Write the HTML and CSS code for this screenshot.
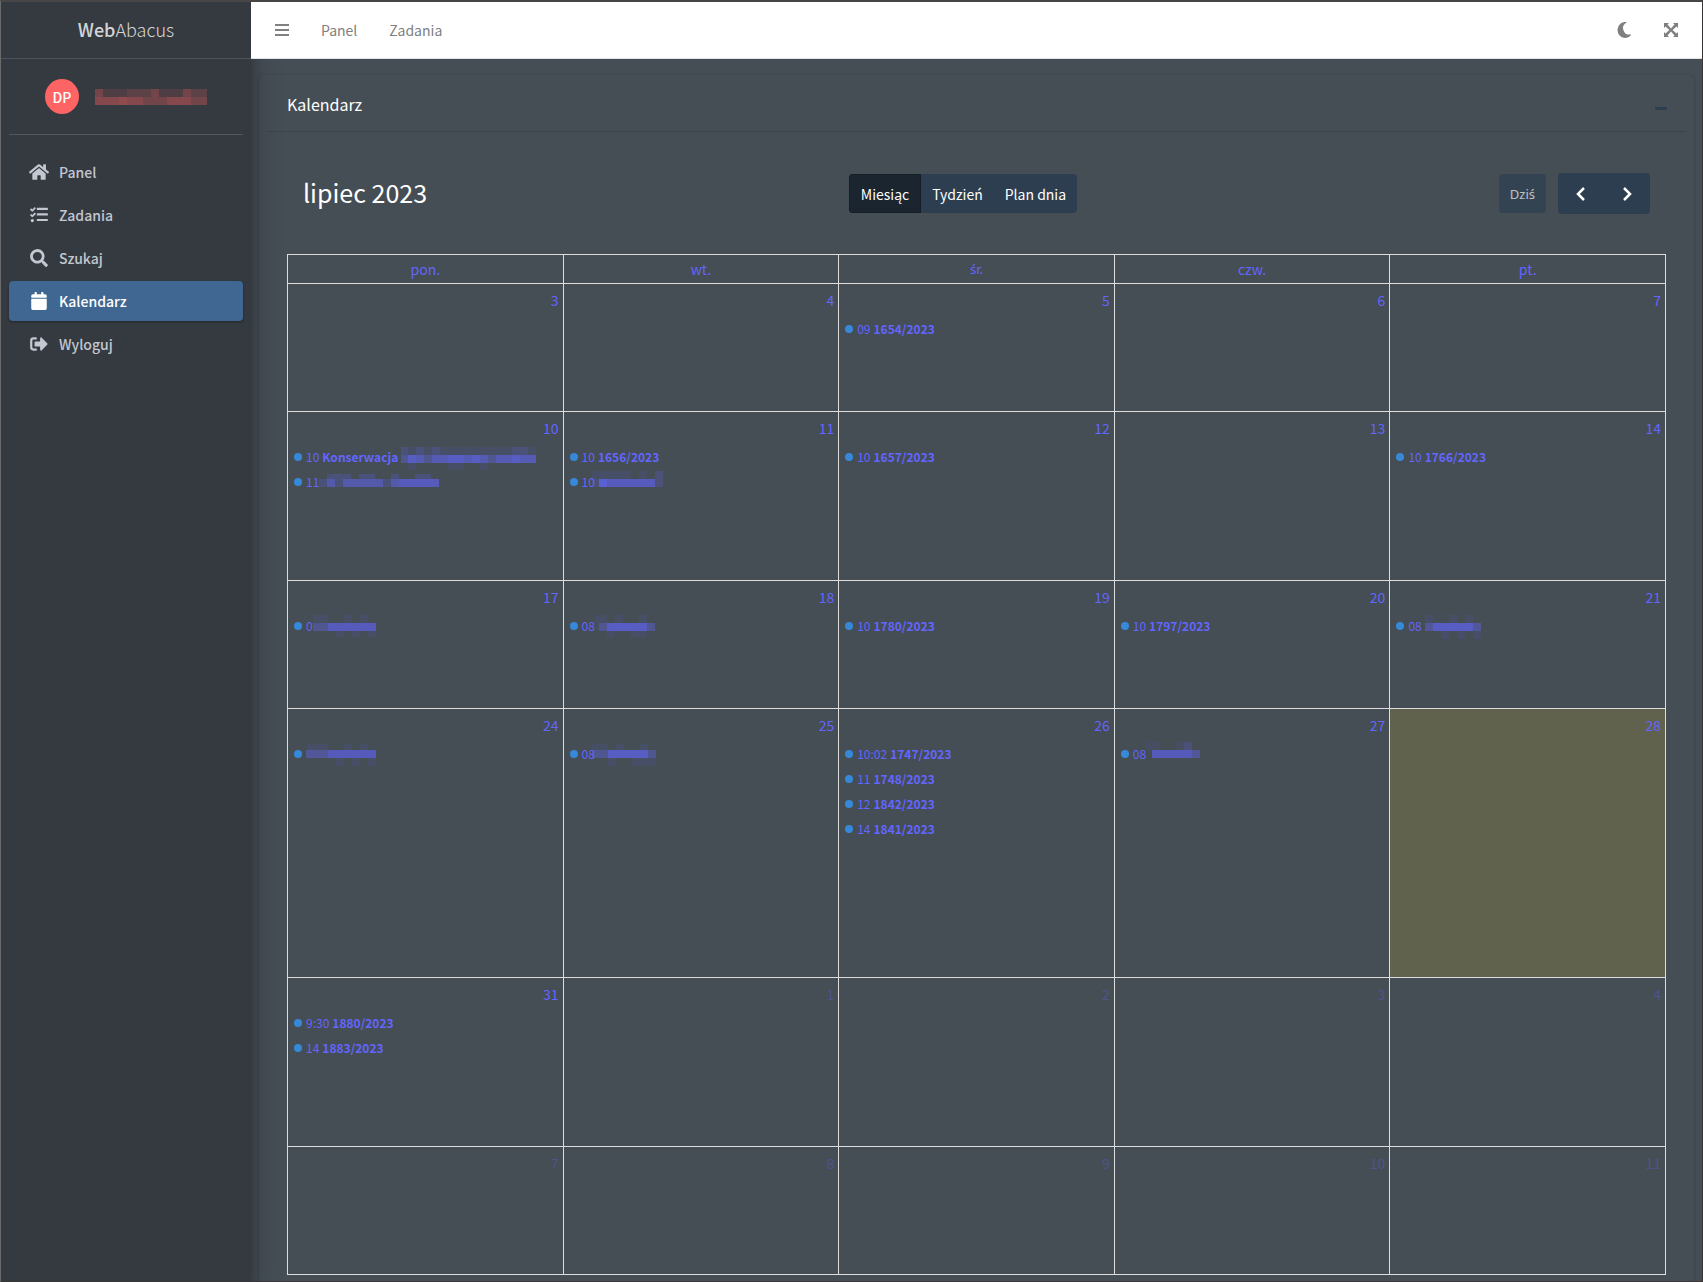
FILE: index.html
```html
<!DOCTYPE html>
<html lang="pl">
<head>
<meta charset="utf-8">
<meta name="viewport" content="width=device-width, initial-scale=1">
<title>WebAbacus – Kalendarz</title>
<link rel="stylesheet" href="styles.css">
</head>
<body>
<div class="app">
  <aside class="sidebar">
    <a href="#" class="brand"><span class="brand-strong">Web</span>Abacus</a>
    <div class="sidebar-inner">
      <a href="#" class="user" aria-label="Profil">
        <span class="avatar">DP</span>
        <svg class="user-name" width="112" height="16" viewBox="0 0 112 16" shape-rendering="crispEdges" aria-hidden="true">
          <path fill-opacity=".13" d="M8 0h24v8H8zM64 0h24v8H64z"/>
          <path fill-opacity=".2" d="M32 0h24v8H32zM96 0h16v8H96z"/>
          <path fill-opacity=".3" d="M0 0h8v8H0zM56 0h8v16H56zM88 0h8v8H88zM48 8h8v8h-8zM64 8h8v8h-8zM96 8h16v8H96z"/>
          <path fill-opacity=".4" d="M0 8h24v8H0zM32 8h16v8H32zM72 8h24v8H72z"/>
          <path fill-opacity=".46" d="M24 8h8v8h-8z"/>
        </svg>
      </a>
      <nav class="side-nav">
        <a href="#" class="side-link">
          <svg class="side-icon" viewBox="0 0 576 512" aria-hidden="true"><path d="M280 148L96 300v164a16 16 0 0 0 16 16l112-1a16 16 0 0 0 16-16v-95a16 16 0 0 1 16-16h64a16 16 0 0 1 16 16v95a16 16 0 0 0 16 16l112 1a16 16 0 0 0 16-16V300L296 148a12 12 0 0 0-16 0zM572 251l-84-69V44a12 12 0 0 0-12-12h-56a12 12 0 0 0-12 12v72l-90-74a48 48 0 0 0-61 0L4 251a12 12 0 0 0-1 17l25 31a12 12 0 0 0 17 2l235-194a12 12 0 0 1 16 0l235 194a12 12 0 0 0 17-2l25-31a12 12 0 0 0-1-17z"/></svg>
          Panel</a>
        <a href="#" class="side-link">
          <svg class="side-icon" viewBox="-32 0 576 512" aria-hidden="true"><path d="M140 35a12 12 0 0 0-17 0L64 94 41 72a12 12 0 0 0-17 0L4 92a12 12 0 0 0 0 17l48 47a18 18 0 0 0 24 0l15-15 69-70a12 12 0 0 0 0-17zM140 194a12 12 0 0 0-17 0l-59 60-23-21a12 12 0 0 0-17 0L4 252a12 12 0 0 0 0 17l48 48a17 17 0 0 0 24 0l84-86a12 12 0 0 0 0-17zM64 368a48 48 0 1 0 0 96 48 48 0 0 0 0-96zM208 48h288a16 16 0 0 1 16 16v32a16 16 0 0 1-16 16H208a16 16 0 0 1-16-16V64a16 16 0 0 1 16-16zM208 208h288a16 16 0 0 1 16 16v32a16 16 0 0 1-16 16H208a16 16 0 0 1-16-16v-32a16 16 0 0 1 16-16zM208 368h288a16 16 0 0 1 16 16v32a16 16 0 0 1-16 16H208a16 16 0 0 1-16-16v-32a16 16 0 0 1 16-16z"/></svg>
          Zadania</a>
        <a href="#" class="side-link">
          <svg class="side-icon" viewBox="-32 0 576 512" aria-hidden="true"><path d="M505 443L405 343c-4-4-11-7-17-7h-16a208 208 0 1 0-36 36v16c0 6 3 13 7 17l100 100c9 9 25 9 34 0l28-28c9-10 9-25 0-34zM208 336a128 128 0 1 1 0-256 128 128 0 0 1 0 256z"/></svg>
          Szukaj</a>
        <a href="#" class="side-link side-link-active" aria-current="page">
          <svg class="side-icon" viewBox="-64 0 576 512" aria-hidden="true"><path d="M12 192h424a12 12 0 0 1 12 12v260a48 48 0 0 1-48 48H48a48 48 0 0 1-48-48V204a12 12 0 0 1 12-12zM448 148v-36a48 48 0 0 0-48-48h-48V12a12 12 0 0 0-12-12h-40a12 12 0 0 0-12 12v52H160V12a12 12 0 0 0-12-12h-40a12 12 0 0 0-12 12v52H48a48 48 0 0 0-48 48v36a12 12 0 0 0 12 12h424a12 12 0 0 0 12-12z"/></svg>
          Kalendarz</a>
        <a href="#" class="side-link">
          <svg class="side-icon" viewBox="-32 0 576 512" aria-hidden="true"><path d="M497 273L329 441c-15 15-41 5-41-17v-96H152a24 24 0 0 1-24-24v-96a24 24 0 0 1 24-24h136V88c0-21 26-32 41-17l168 168c9 9 9 25 0 34zM192 436v-40a12 12 0 0 0-12-12H96a32 32 0 0 1-32-32V160a32 32 0 0 1 32-32h84a12 12 0 0 0 12-12V76a12 12 0 0 0-12-12H96a96 96 0 0 0-96 96v192a96 96 0 0 0 96 96h84a12 12 0 0 0 12-12z"/></svg>
          Wyloguj</a>
      </nav>
    </div>
  </aside>

  <div class="page">
    <header class="topbar">
      <nav class="top-nav">
        <button class="icon-button" type="button" aria-label="Menu">
          <svg width="14" height="16" viewBox="0 0 14 16" aria-hidden="true"><path d="M0 2h14v2H0zM0 7h14v2H0zM0 12h14v2H0z"/></svg>
        </button>
        <a href="#" class="top-link">Panel</a>
        <a href="#" class="top-link">Zadania</a>
      </nav>
      <div class="top-tools">
        <button class="icon-button" type="button" aria-label="Tryb ciemny">
          <svg width="16" height="16" viewBox="0 0 512 512" aria-hidden="true"><path d="M283 512c79 0 151-36 199-95 7-8 0-21-11-19A204 204 0 0 1 332 20c9-5 7-19-4-21a256 256 0 1 0-45 513z"/></svg>
        </button>
        <button class="icon-button" type="button" aria-label="Pełny ekran">
          <svg width="14" height="14" viewBox="0 0 14 14" aria-hidden="true"><path d="M0 0h5L3.500 1.500 7 5.400l3.500-3.900L9 0h5v5l-1.500-1.500L8.600 7l3.900 3.500L14 9v5H9l1.500-1.500L7 8.600l-3.500 3.900L5 14H0V9l1.500 1.500L5.400 7 1.500 3.500 0 5z"/></svg>
        </button>
      </div>
    </header>

    <main class="content">
      <section class="card">
        <div class="card-header">
          <h1 class="card-title">Kalendarz</h1>
          <button class="collapse" type="button" aria-label="Zwiń">
            <svg width="12" height="4" viewBox="0 0 12 4" aria-hidden="true"><rect width="12" height="3" rx="1"/></svg>
          </button>
        </div>
        <div class="card-body">
          <div class="toolbar">
            <h2 class="month">lipiec 2023</h2>
            <div class="button-group">
              <button class="btn btn-active" type="button">Miesiąc</button>
              <button class="btn" type="button">Tydzień</button>
              <button class="btn" type="button">Plan dnia</button>
            </div>
            <div class="toolbar-end">
              <button class="btn btn-today latin-ext" type="button" disabled>Dziś</button>
              <div class="button-group">
                <button class="btn btn-arrow" type="button" aria-label="Poprzedni">
                  <svg width="10" height="16" viewBox="0 0 10 16" aria-hidden="true"><path d="M8 2L2 8l6 6"/></svg>
                </button>
                <button class="btn btn-arrow" type="button" aria-label="Następny">
                  <svg width="10" height="16" viewBox="0 0 10 16" aria-hidden="true"><path d="M2 2l6 6-6 6"/></svg>
                </button>
              </div>
            </div>
          </div>

          <table class="calendar">
            <thead>
              <tr><th>pon.</th><th>wt.</th><th class="latin-ext">śr.</th><th>czw.</th><th>pt.</th></tr>
            </thead>
            <tbody>
              <tr class="week">
                <td><a href="#" class="day">3</a></td>
                <td><a href="#" class="day">4</a></td>
                <td><a href="#" class="day">5</a>
                  <a href="#" class="event"><span>09</span><b>1654/2023</b></a></td>
                <td><a href="#" class="day">6</a></td>
                <td><a href="#" class="day">7</a></td>
              </tr>
              <tr class="week week-medium">
                <td><a href="#" class="day">10</a>
                  <a href="#" class="event"><span>10</span><b>Konserwacja</b>
                    <svg class="mask" width="135" height="24" viewBox="1 -2 135 24" aria-hidden="true">
                      <path fill-opacity=".22" d="M1 0h7v8H1zM16 0h8v8h-8zM32 0h8v8h-8zM112 0h16v8h-16z"/>
                      <path fill-opacity=".1" d="M8 0h8v8H8zM24 0h8v8h-8zM40 0h72v8H40zM128 0h8v8h-8zM8 16h8v7H8zM48 16h16v7H48zM80 16h8v7h-8z"/>
                      <path fill-opacity=".35" d="M1 8h7v8H1zM24 8h8v8h-8zM88 8h8v8h-8z"/>
                      <path fill-opacity=".55" d="M16 8h8v8h-8zM32 8h16v8H32zM64 8h8v8h-8zM80 8h8v8h-8zM96 8h16v8H96zM120 8h16v8h-16z"/>
                      <path fill-opacity=".65" d="M8 8h8v8H8zM48 8h16v8H48zM72 8h8v8h-8zM112 8h8v8h-8z"/>
                    </svg></a>
                  <a href="#" class="event"><span>11</span>
                    <svg class="mask mask-tight" width="120" height="24" viewBox="0 -1 120 24" aria-hidden="true">
                      <path fill-opacity=".22" d="M0 8h8v8H0zM8 3h24v5H8zM40 3h16v5H40zM72 3h8v5h-8zM96 3h16v5H96zM64 8h8v8h-8zM16 8h8v8h-8z"/>
                      <path fill-opacity=".5" d="M8 8h8v8H8zM24 8h40v8H24zM72 8h8v8h-8z"/>
                      <path fill-opacity=".6" d="M80 8h40v8H80z"/>
                    </svg></a></td>
                <td><a href="#" class="day">11</a>
                  <a href="#" class="event"><span>10</span><b>1656/2023</b></a>
                  <a href="#" class="event"><span>10</span>
                    <svg class="mask mask-over" width="71" height="24" viewBox="1 -1 71 24" aria-hidden="true">
                      <path fill-opacity=".1" d="M1 0h39v8H1zM48 0h8v8h-8z"/>
                      <path fill-opacity=".2" d="M64 0h8v16h-8zM1 8h7v8H1z"/>
                      <path fill-opacity=".6" d="M16 8h48v8H16z"/>
                      <path fill-opacity=".75" d="M8 8h8v8H8z"/>
                    </svg></a></td>
                <td><a href="#" class="day">12</a>
                  <a href="#" class="event"><span>10</span><b>1657/2023</b></a></td>
                <td><a href="#" class="day">13</a></td>
                <td><a href="#" class="day">14</a>
                  <a href="#" class="event"><span>10</span><b>1766/2023</b></a></td>
              </tr>
              <tr class="week">
                <td><a href="#" class="day">17</a>
                  <a href="#" class="event"><span>0</span>
                    <svg class="mask mask-tight" width="63" height="24" viewBox="1 -1 63 24" aria-hidden="true">
                      <path fill-opacity=".1" d="M1 0h15v8H1zM32 0h8v8h-8zM48 0h8v8h-8zM24 16h8v6h-8zM40 16h8v6h-8zM56 16h8v6h-8z"/>
                      <path fill-opacity=".35" d="M1 8h15v8H1z"/>
                      <path fill-opacity=".6" d="M16 8h48v8H16z"/>
                    </svg></a></td>
                <td><a href="#" class="day">18</a>
                  <a href="#" class="event"><span>08</span>
                    <svg class="mask mask-tight" width="60" height="24" viewBox="4 -1 60 24" aria-hidden="true">
                      <path fill-opacity=".1" d="M4 0h12v8H4zM24 0h8v8h-8zM48 0h8v8h-8zM4 8h4v8H4zM16 16h8v6h-8zM40 16h16v6H40z"/>
                      <path fill-opacity=".35" d="M8 8h8v8H8zM56 8h8v8h-8z"/>
                      <path fill-opacity=".65" d="M16 8h40v8H16z"/>
                    </svg></a></td>
                <td><a href="#" class="day">19</a>
                  <a href="#" class="event"><span>10</span><b>1780/2023</b></a></td>
                <td><a href="#" class="day">20</a>
                  <a href="#" class="event"><span>10</span><b>1797/2023</b></a></td>
                <td><a href="#" class="day">21</a>
                  <a href="#" class="event"><span>08</span>
                    <svg class="mask" width="56" height="24" viewBox="0 -1 56 24" aria-hidden="true">
                      <path fill-opacity=".1" d="M0 0h8v8H0zM24 0h8v8h-8zM40 0h8v8h-8zM16 16h8v8h-8zM32 16h8v8h-8zM48 16h8v8h-8z"/>
                      <path fill-opacity=".4" d="M0 8h8v8H0zM48 8h8v8h-8z"/>
                      <path fill-opacity=".65" d="M8 8h40v8H8z"/>
                    </svg></a></td>
              </tr>
              <tr class="week week-tall">
                <td><a href="#" class="day">24</a>
                  <a href="#" class="event">
                    <svg class="mask" width="70" height="24" viewBox="0 0 70 24" aria-hidden="true">
                      <path fill-opacity=".1" d="M1 2h21v6H1zM38 2h8v6h-8zM54 2h8v6h-8zM30 16h8v8h-8zM46 16h8v8h-8zM62 16h8v8h-8z"/>
                      <path fill-opacity=".4" d="M0 8h22v8H0z"/>
                      <path fill-opacity=".6" d="M22 8h48v8H22z"/>
                    </svg></a></td>
                <td><a href="#" class="day">25</a>
                  <a href="#" class="event"><span>08</span>
                    <svg class="mask mask-over" width="64" height="24" viewBox="0 0 64 24" aria-hidden="true">
                      <path fill-opacity=".1" d="M0 2h16v6H0zM24 2h8v6h-8zM48 2h8v6h-8zM16 16h8v8h-8zM40 16h24v8H40z"/>
                      <path fill-opacity=".35" d="M0 8h16v8H0zM56 8h8v8h-8z"/>
                      <path fill-opacity=".65" d="M16 8h40v8H16z"/>
                    </svg></a></td>
                <td><a href="#" class="day">26</a>
                  <a href="#" class="event"><span>10:02</span><b>1747/2023</b></a>
                  <a href="#" class="event"><span>11</span><b>1748/2023</b></a>
                  <a href="#" class="event"><span>12</span><b>1842/2023</b></a>
                  <a href="#" class="event"><span>14</span><b>1841/2023</b></a></td>
                <td><a href="#" class="day">27</a>
                  <a href="#" class="event"><span>08</span>
                    <svg class="mask mask-tight" width="54" height="24" viewBox="0 0 54 24" aria-hidden="true">
                      <path fill-opacity=".08" d="M0 0h14v8H0zM30 0h8v8h-8z"/>
                      <path fill-opacity=".2" d="M38 0h8v8h-8z"/>
                      <path fill-opacity=".4" d="M46 8h8v8h-8z"/>
                      <path fill-opacity=".6" d="M6 8h40v8H6z"/>
                    </svg></a></td>
                <td class="today"><a href="#" class="day">28</a></td>
              </tr>
              <tr class="week week-medium">
                <td><a href="#" class="day">31</a>
                  <a href="#" class="event"><span>9:30</span><b>1880/2023</b></a>
                  <a href="#" class="event"><span>14</span><b>1883/2023</b></a></td>
                <td><a href="#" class="day day-other">1</a></td>
                <td><a href="#" class="day day-other">2</a></td>
                <td><a href="#" class="day day-other">3</a></td>
                <td><a href="#" class="day day-other">4</a></td>
              </tr>
              <tr class="week">
                <td><a href="#" class="day day-other">7</a></td>
                <td><a href="#" class="day day-other">8</a></td>
                <td><a href="#" class="day day-other">9</a></td>
                <td><a href="#" class="day day-other">10</a></td>
                <td><a href="#" class="day day-other">11</a></td>
              </tr>
            </tbody>
          </table>
        </div>
      </section>
    </main>
  </div>
</div>
</body>
</html>
```
FILE: styles.css
```css
*,
*::before,
*::after {
  box-sizing: border-box;
}

body {
  margin: 0;
  font-family: "Noto Sans CJK SC", "Noto Sans", sans-serif;
  font-size: 14px;
  line-height: 20px;
  color: #fff;
  background: #454d55;
}

a {
  color: inherit;
  text-decoration: none;
}

button {
  margin: 0;
  padding: 0;
  border: 0;
  background: none;
  font: inherit;
  color: inherit;
}

h1,
h2 {
  margin: 0;
  font-weight: 400;
}

svg {
  display: block;
  flex: none;
  fill: currentColor;
}

.app {
  display: flex;
  height: 100vh;
  border: 1px solid #3a3637;
  border-top: 2px solid #484546;
  border-left-color: #6b6b6b;
  overflow: hidden;
}

/* Sidebar */
.sidebar {
  position: relative;
  z-index: 2;
  flex: none;
  width: 250px;
  background: #343a40;
  box-shadow: 0 14px 28px rgba(0, 0, 0, .25), 0 10px 10px rgba(0, 0, 0, .22);
}

.brand {
  display: flex;
  align-items: center;
  justify-content: center;
  height: 57px;
  padding-bottom: 2px;
  border-bottom: 1px solid #4b545c;
  font-size: 18px;
  font-weight: 300;
  color: rgba(255, 255, 255, .8);
}

.brand-strong {
  font-weight: 500;
}

.sidebar-inner {
  padding: 0 8px;
}

.user {
  display: flex;
  align-items: center;
  gap: 16px;
  height: 76px;
  padding: 0 36px;
  border-bottom: 1px solid #4f5962;
}

.avatar {
  display: flex;
  align-items: center;
  justify-content: center;
  width: 35px;
  height: 35px;
  border-radius: 50%;
  background: #ff6464;
  font-weight: 500;
}

.user-name {
  color: #ff5f5f;
}

.side-nav {
  display: flex;
  flex-direction: column;
  gap: 3px;
  margin-top: 17px;
}

.side-link {
  display: flex;
  align-items: center;
  gap: 10px;
  height: 40px;
  padding: 0 20px;
  border-radius: 4px;
  font-weight: 500;
  color: #c2c7d0;
}

.side-icon {
  width: 20px;
  height: 18px;
}

.side-link-active {
  background: #3f6791;
  color: #fff;
  box-shadow: 0 1px 3px rgba(0, 0, 0, .12), 0 1px 2px rgba(0, 0, 0, .24);
}

/* Top bar */
.page {
  display: flex;
  flex: 1;
  flex-direction: column;
  min-width: 0;
}

.topbar {
  position: relative;
  z-index: 3;
  display: flex;
  flex: none;
  align-items: center;
  justify-content: space-between;
  height: 57px;
  padding: 0 24px;
  border-bottom: 1px solid #dee2e6;
  background: #fff;
  color: #808080;
}

.top-nav,
.top-tools {
  display: flex;
  align-items: center;
  gap: 32px;
}

/* Card */
.content {
  flex: 1;
  min-height: 0;
  padding: 16px 8px 0;
  overflow: auto;
  scrollbar-width: none;
}

.card {
  border-radius: 4px;
  background: #454d55;
  box-shadow: 0 0 1px rgba(0, 0, 0, .125), 0 1px 3px rgba(0, 0, 0, .2);
}

.card-header {
  display: flex;
  align-items: center;
  justify-content: space-between;
  height: 57px;
  margin: 0 8px;
  padding: 2px 19px 0 20px;
  border-bottom: 1px solid #3c4349;
}

.card-title {
  font-size: 16px;
  line-height: 24px;
}

.collapse {
  padding-top: 10px;
  color: #2c3e50;
}

.card-body {
  padding: 20px 28px;
}

/* Calendar toolbar */
.toolbar {
  display: flex;
  align-items: center;
  justify-content: space-between;
  margin-bottom: 20px;
  padding: 21px 16px 20px;
}

.month {
  padding-bottom: 3px;
  font-size: 25px;
  line-height: 32px;
}

.toolbar-end {
  display: flex;
  align-items: center;
  gap: 12px;
}

.button-group {
  display: flex;
  border-radius: 4px;
  overflow: hidden;
}

.btn {
  height: 39px;
  padding: 0 11px;
  background: #2c3e50;
  color: #fff;
}

.btn-active {
  border: 1px solid #151e27;
  background: #1a252f;
}

.btn-today {
  border-radius: 4px;
  opacity: .65;
}

.btn-arrow {
  display: flex;
  align-items: center;
  justify-content: center;
  width: 46px;
  height: 41px;
}

.btn-arrow svg {
  fill: none;
  stroke: currentColor;
  stroke-width: 2.5;
}

/* Month grid */
.calendar {
  width: 100%;
  border-collapse: collapse;
  table-layout: fixed;
  color: #6366ff;
}

.calendar th,
.calendar td {
  padding: 0;
  border: 1px solid #ddd;
}

.calendar th {
  height: 29px;
  font-weight: 400;
}

.calendar td {
  vertical-align: top;
}

.latin-ext {
  font-family: "Noto Sans", sans-serif;
  font-size: 13px;
}

.week {
  height: 128px;
}

.week-medium {
  height: 169px;
}

.week-tall {
  height: 269px;
}

.today {
  background: rgba(255, 220, 40, .15);
}

.day {
  display: block;
  padding: 6px 4px;
  text-align: right;
}

.day-other {
  opacity: .3;
}

.event {
  display: flex;
  align-items: center;
  gap: 3px;
  height: 25px;
  padding: 0 6px;
  font-size: 12px;
  white-space: nowrap;
}

.event::before {
  content: "";
  width: 8px;
  height: 8px;
  margin-right: 1px;
  border-radius: 50%;
  background: #3788d8;
}

.mask {
  shape-rendering: crispEdges;
  overflow: visible;
}

.mask-tight {
  margin-left: -3px;
}

.mask-over {
  margin-left: -6px;
}
```
